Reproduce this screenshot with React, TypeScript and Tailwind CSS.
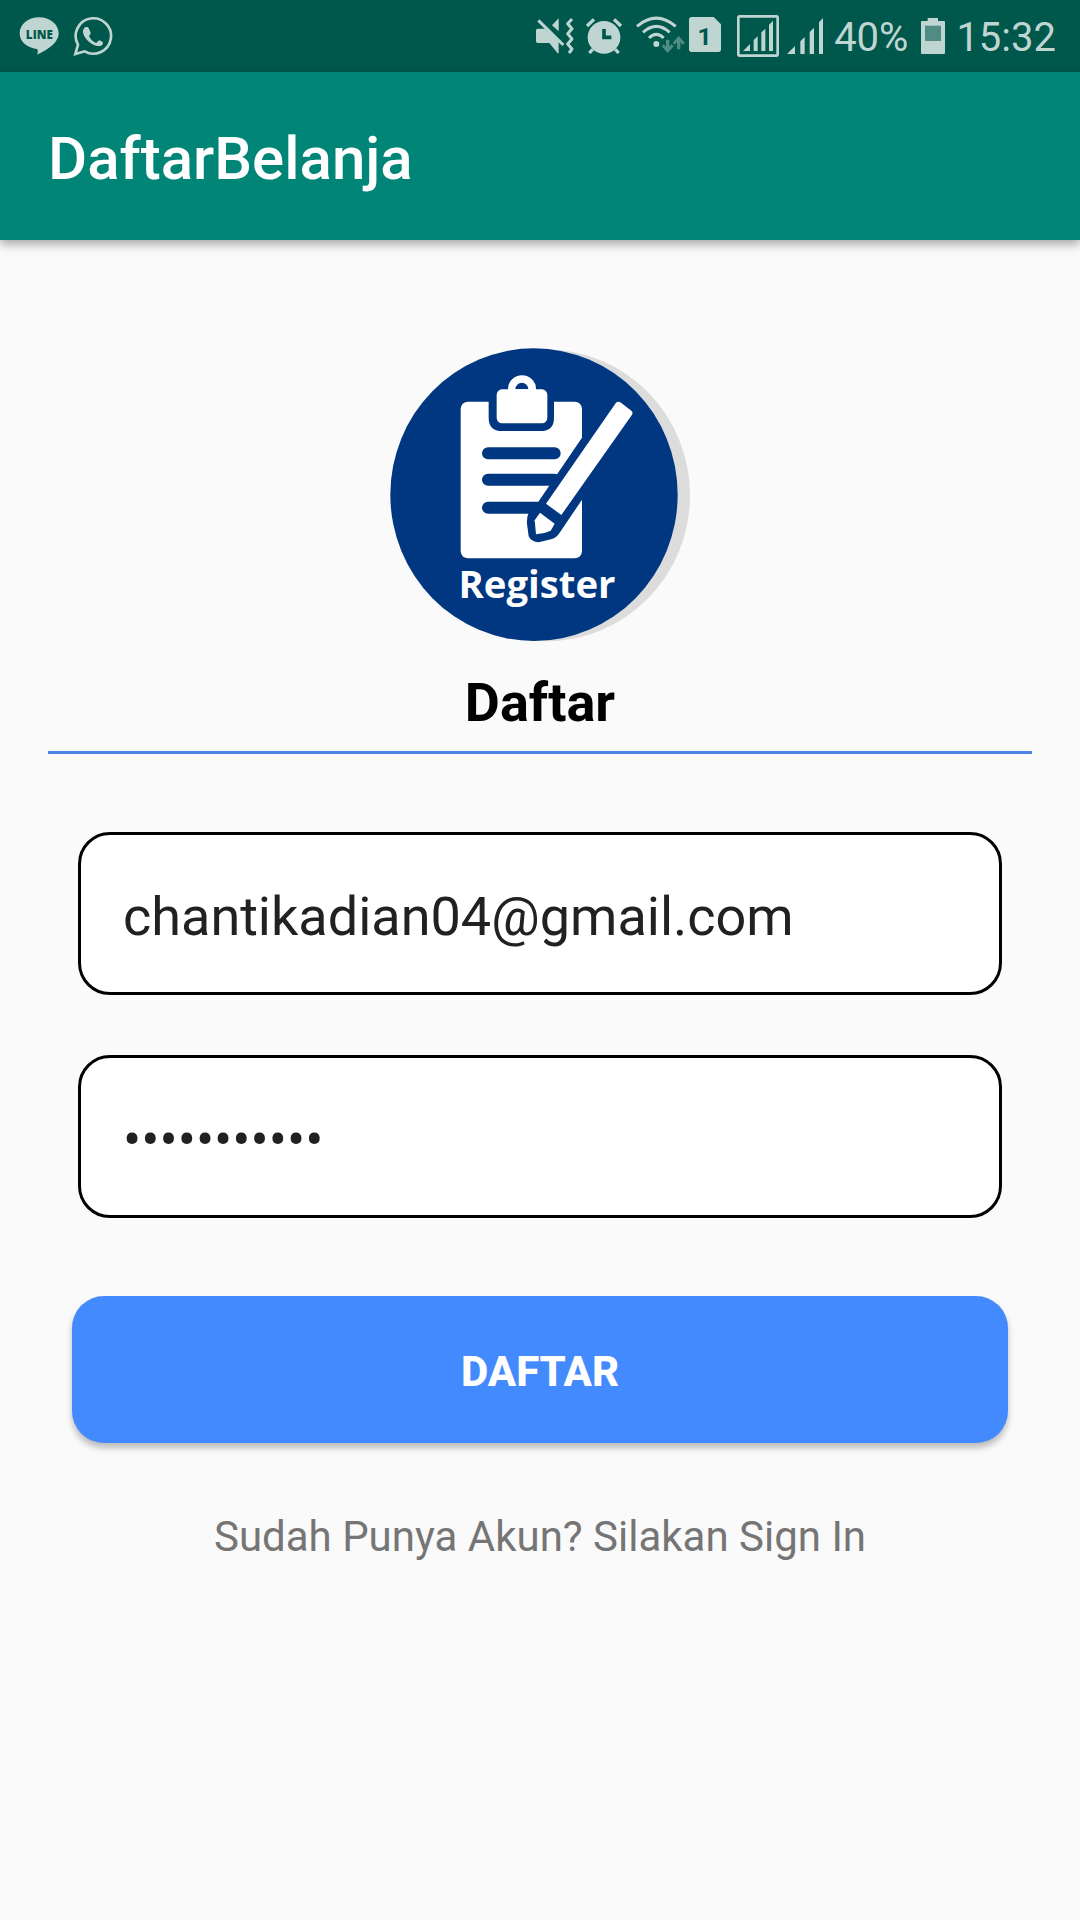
import { useState, type ReactNode } from "react";

function StatusIcon({ box, className, label, children }: { box: string; className: string; label: string; children: ReactNode }) {
  return (
    <svg viewBox={box} className={className} role="img" aria-label={label} fill="currentColor">
      {children}
    </svg>
  );
}

function StatusBar() {
  return (
    <div className="flex h-[72px] items-center justify-between bg-[#00574b] pr-6 pl-[19px] text-[#bfd5d2]">
      <div className="flex items-center gap-3.5">
        <StatusIcon box="57 48 120 120" className="h-10 w-10" label="LINE">
          <path d="M117 52c-33 0-58 21-58 48 0 25 21 43 51 47 4 1 4 5 2 17 25-11 64-34 64-64 0-27-26-48-59-48z" />
          <text x="118" y="116" textAnchor="middle" fontSize="35" className="fill-[#00574b] font-['Open_Sans'] font-extrabold">
            LINE
          </text>
        </StatusIcon>
        <StatusIcon box="219 48 120 120" className="h-10 w-10" label="WhatsApp">
          <path
            d="M226 162l8-28a53 53 0 1 1 20 20z"
            fill="none"
            stroke="currentColor"
            strokeWidth="8"
          />
          <path d="M258 81c5-1 7 0 9 5l5 12c1 4-5 8-5 11 4 9 12 16 21 20 4 0 7-9 11-8l9 5c2 1 1 5-1 8-4 5-12 5-19 3-18-6-33-20-38-36-3-9 1-19 8-20z" />
        </StatusIcon>
      </div>

      <div className="flex items-center">
        <StatusIcon box="45 48 120 120" className="h-10 w-10" label="Muted, vibrate">
          <path d="M53 86h22l41 38v36h-3l-25-31H53q-5 0-5-5V91q0-5 5-5z" />
          <path d="M116 55v39L96 76z" />
          <path d="M55 61l75 74" fill="none" stroke="currentColor" strokeWidth="9" />
          <path d="M156 57l-13 14 13 15-13 15 13 16-13 15 13 15-9 12" fill="none" stroke="currentColor" strokeWidth="9" strokeLinejoin="round" />
        </StatusIcon>
        <StatusIcon box="195 48 114 120" className="ml-2.5 h-10 w-[38px]" label="Alarm">
          <circle cx="252" cy="112" r="49" />
          <g fill="none" stroke="currentColor" strokeWidth="10">
            <path d="M201 78l21-20M303 78l-21-20" />
            <path d="M218 148l-10 11M286 148l10 11" />
          </g>
          <path d="M252 87v25h22" fill="none" stroke="#00574b" strokeWidth="11" />
        </StatusIcon>
        <StatusIcon box="345 48 150 120" className="ml-3 h-10 w-[50px]" label="Wi-Fi">
          <circle cx="409" cy="132" r="9" />
          <g fill="none" stroke="currentColor" strokeWidth="9">
            <path d="M351 79q58-49 116 0" />
            <path d="M369 97q40-36 80 0" />
            <path d="M387 114q22-22 44 0" />
          </g>
          <path d="M438 119h10v21l7-7 6 6-18 20-18-20 6-6 7 7zM471 148h10v-21l7 7 6-6-18-20-18 20 6 6 7-7z" className="text-[#4f8d84]" />
        </StatusIcon>
        <StatusIcon box="-30 48 96 120" className="ml-1 h-10 w-8" label="SIM 1">
          <path d="M-22 51h66l22 22v75q0 8-8 8h-80q-8 0-8-8V59q0-8 8-8z" />
          <text x="17" y="134" textAnchor="middle" fontSize="74" className="fill-[#00574b] font-[Roboto] font-bold">
            1
          </text>
        </StatusIcon>
        <StatusIcon box="114 42 126 126" className="ml-4 h-[42px] w-[42px]" label="Signal, SIM 1">
          <rect x="118" y="46" width="118" height="118" rx="4" fill="none" stroke="currentColor" strokeWidth="8" />
          <path d="M132 150l21-21v21zM164 150v-33l12-11v44zM187 150V94l12-11v67zM210 150V71l12-12v91z" />
        </StatusIcon>
        <StatusIcon box="261 42 111 126" className="ml-2 h-[42px] w-[37px]" label="Signal, SIM 2">
          <path d="M261 159l24-24v24zM301 159v-38l13-13v51zM329 159V93l13-13v79zM357 159V64l12-13v108z" />
        </StatusIcon>
        <span className="ml-2.5 pt-1 font-[Roboto,sans-serif] text-[40px] leading-[68px]">40%</span>
        <StatusIcon box="660 48 78 120" className="ml-3 h-10 w-[26px]" label="Battery">
          <path d="M683 54h31v9h18q3 0 3 3v93q0 3-3 3h-66q-3 0-3-3V66q0-3 3-3h17z" />
          <rect x="675" y="77" width="48" height="46" className="fill-[#4f8d84]" />
        </StatusIcon>
        <span className="ml-2.5 pt-1 font-[Roboto,sans-serif] text-[40px] leading-[68px]">15:32</span>
      </div>
    </div>
  );
}

function RegisterLogo() {
  return (
    <svg viewBox="30 23 900 882" className="h-[294px] w-[300px]" role="img" aria-label="Register">
      <ellipse cx="498" cy="465" rx="432" ry="438" fill="#dcdcdc" />
      <ellipse cx="462" cy="463" rx="431" ry="439" fill="#003780" />
      <rect x="242" y="184" width="364" height="470" rx="22" fill="#fff" />
      <path d="M326 180h196v52q0 40-40 40H366q-40 0-40-40z" fill="#003780" />
      <rect x="350" y="147" width="152" height="102" rx="16" fill="#fff" />
      <path d="M384 150v-5a42 40 0 0 1 84 0v5zM406 147h39a19 19 0 0 0-39 0z" fill="#fff" fillRule="evenodd" />
      <g stroke="#003780" strokeWidth="36" strokeLinecap="round">
        <path d="M324 339h200M324 418h200M324 502h150" />
      </g>
      <path d="M612 283L472 489 445 520q-5 10-4 30l5 38q8 17 30 18l40-10q15-5 22-17L612 469z" fill="#003780" />
      <path d="M708 187q7-6 15 0l31 24q6 5 2 12L544 524l-46-34z" fill="#fff" />
      <path d="M480 517l44 33-12 21q-20 10-44 11l-4-42z" fill="#fff" />
      <text x="471" y="772" textAnchor="middle" fontSize="115" fill="#fff" className="font-['Open_Sans'] font-bold">
        Register
      </text>
    </svg>
  );
}

const fieldClass =
  "block h-[163px] w-full rounded-[32px] border-3 border-black bg-white px-[42px] pt-1.5 text-[54px] text-[#212121] outline-none";

export default function App() {
  const [email, setEmail] = useState("chantikadian04@gmail.com");
  const [password, setPassword] = useState("belanja2019");

  return (
    <div className="flex min-h-screen flex-col bg-[#fafafa] font-[Roboto,sans-serif]">
      <StatusBar />
      <header className="relative flex h-[168px] items-center bg-[#008577] px-12 pt-1.5 shadow-[0_4px_10px_rgba(0,0,0,0.35)]">
        <h1 className="text-[60px] font-medium text-white">DaftarBelanja</h1>
      </header>

      <main className="flex flex-col items-center px-12 pt-[108px]">
        <RegisterLogo />
        <h2 className="mt-7 w-full border-b-3 border-[#4a86e8] pb-4 text-center text-[54px] leading-[65px] font-bold text-black">
          Daftar
        </h2>

        <form className="w-full px-6 pt-[78px]" onSubmit={(e) => e.preventDefault()}>
          <div className="flex flex-col gap-[60px] px-1.5">
            <input type="email" aria-label="Email" className={fieldClass} value={email} onChange={(e) => setEmail(e.target.value)} />
            <input
              type="password"
              aria-label="Password"
              className={fieldClass}
              value={password}
              onChange={(e) => setPassword(e.target.value)}
            />
          </div>
          <button
            type="submit"
            className="mt-[78px] h-[147px] w-full rounded-[32px] bg-[#448aff] pt-1 text-[42px] font-extrabold text-white shadow-[0_5px_6px_rgba(0,0,0,0.25)]"
          >
            DAFTAR
          </button>
        </form>

        <a href="#sign-in" className="mt-[69px] text-[42px] leading-[50px] text-[#757575]">
          Sudah Punya Akun? Silakan Sign In
        </a>
      </main>
    </div>
  );
}
